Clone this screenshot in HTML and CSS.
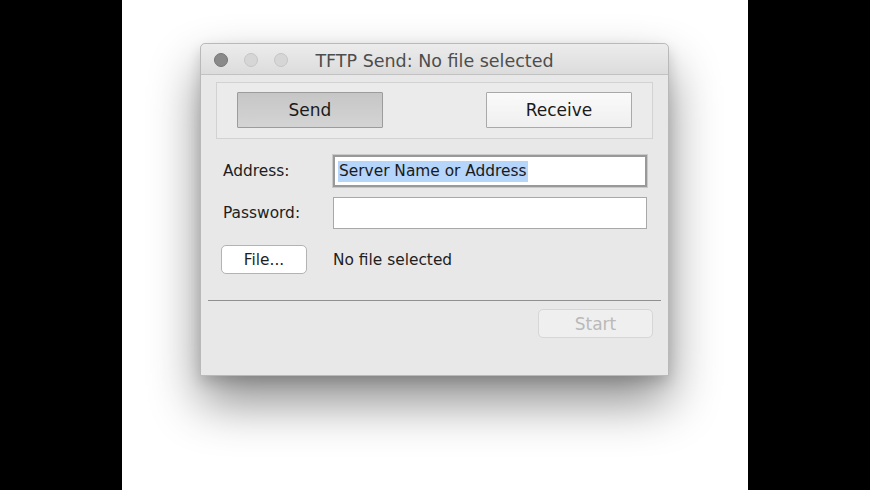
FILE: index.html
```html
<!DOCTYPE html>
<html lang="en">
<head>
  <meta charset="UTF-8" />
  <title>TFTP Send</title>
  <link rel="stylesheet" href="styles.css">
</head>
<body>
  <div class="stage">
    <div class="window">
      <div class="titlebar">
        <div class="lights">
          <span class="light close"></span>
          <span class="light"></span>
          <span class="light"></span>
        </div>
        <div class="title">TFTP Send: No file selected</div>
      </div>

      <div class="content">
        <div class="mode-box">
          <button class="mode-btn pressed">Send</button>
          <button class="mode-btn">Receive</button>
        </div>

        <div class="form">
          <label for="address">Address:</label>
          <div class="field focused" id="address"><span class="selected">Server Name or Address</span></div>
          <label for="password">Password:</label>
          <div class="field" id="password"></div>
          <button class="file-btn">File...</button>
          <span class="file-name">No file selected</span>
        </div>

        <div class="separator"></div>

        <div class="actions">
          <button class="start-btn" disabled>Start</button>
        </div>
      </div>
    </div>
  </div>
</body>
</html>
```

FILE: styles.css
```css
html, body {
  margin: 0;
  padding: 0;
  width: 100%;
  height: 100%;
  background-color: black;
  font-family: "DejaVu Sans", sans-serif;
  overflow: hidden;
}

body {
  display: flex;
  justify-content: center;
}

.stage {
  width: 626px;
  height: 490px;
  background-color: white;
}

.window {
  box-sizing: border-box;
  width: 469px;
  height: 333px;
  margin: 43px 0 0 78px;
  background-color: #e8e8e8;
  border: 1px solid #b9b9b9;
  border-radius: 5px 5px 0 0;
  box-shadow: 0 26px 50px rgba(0, 0, 0, 0.45), 0 6px 14px rgba(0, 0, 0, 0.15);
  display: flex;
  flex-direction: column;
}

.titlebar {
  box-sizing: border-box;
  height: 31px;
  display: grid;
  grid-template-columns: 1fr auto 1fr;
  align-items: center;
  background: linear-gradient(#ececec, #dcdcdc);
  border-bottom: 1px solid #c2c2c2;
  border-radius: 5px 5px 0 0;
}

.lights {
  display: flex;
  gap: 16px;
  padding: 2px 0 0 13px;
}

.light {
  box-sizing: border-box;
  width: 14px;
  height: 14px;
  border-radius: 50%;
  background-color: #d6d6d6;
  border: 1px solid #c6c6c6;
}

.light.close {
  background-color: #8a8a8a;
  border-color: #767676;
}

.title {
  font-size: 17.5px;
  color: #4d4d4d;
  padding-top: 3px;
}

.content {
  padding: 7px 15px 0 15px;
  display: flex;
  flex-direction: column;
}

.mode-box {
  display: flex;
  justify-content: space-between;
  padding: 9px 20px 10px;
  background-color: #ebebeb;
  border: 1px solid #d2d2d2;
}

.mode-btn {
  box-sizing: border-box;
  width: 146px;
  height: 36px;
  font-family: inherit;
  font-size: 17px;
  color: #1a1a1a;
  background: linear-gradient(#fafafa, #efefef);
  border: 1px solid #a9a9a9;
  border-radius: 1px;
  padding: 0;
}

.mode-btn.pressed {
  background: linear-gradient(#c6c6c6, #d4d4d4);
  border-color: #9c9c9c;
}

.form {
  display: grid;
  grid-template-columns: 110px 314px;
  align-items: center;
  row-gap: 10px;
  padding: 16px 0 0 7px;
  font-size: 15.4px;
  color: #1e1e1e;
}

.field {
  box-sizing: border-box;
  height: 32px;
  background-color: white;
  border: 1px solid #a8a8a8;
  display: flex;
  align-items: center;
  padding-left: 4px;
}

.field.focused {
  border: 2px solid #999999;
  box-shadow: 0 0 0 1px #c9c9c9;
  padding-left: 3px;
}

.selected {
  background-color: #b5d5fb;
  color: #1a1a1a;
  padding: 1px 1px 2px;
}

.file-btn {
  box-sizing: border-box;
  width: 86px;
  height: 29px;
  margin: 6px 0 0 -2px;
  font-family: inherit;
  font-size: 15.4px;
  color: #1e1e1e;
  background-color: white;
  border: 1px solid #b3b3b3;
  border-radius: 5px;
  padding: 0;
}

.file-name {
  margin-top: 6px;
}

.separator {
  height: 1px;
  margin: 26px -8px 0 -8px;
  background-color: #909090;
}

.actions {
  display: flex;
  justify-content: flex-end;
  padding-top: 8px;
}

.start-btn {
  box-sizing: border-box;
  width: 115px;
  height: 29px;
  font-family: inherit;
  font-size: 17px;
  color: #b9b9b9;
  background-color: #efefef;
  border: 1px solid #d6d6d6;
  border-radius: 5px;
  padding: 0;
}
```
